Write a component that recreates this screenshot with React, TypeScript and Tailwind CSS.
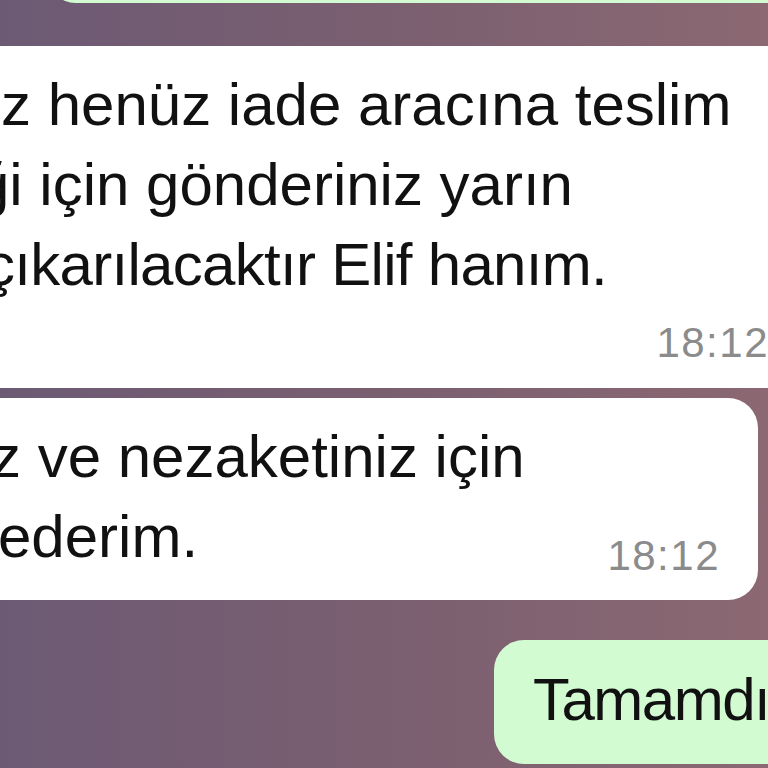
const font = { fontFamily: '"Liberation Sans", Arial, sans-serif' };

type Line = { hidden: string; shown: string; edge: number; tight?: boolean };

// edge = x (relative to the content start at -360px) where the hidden part ends
function TextLine({ line }: { line: Line }) {
  return (
    <div className="flex whitespace-nowrap leading-[80px]">
      <span className="flex shrink-0 justify-end" style={{ width: line.edge }}>
        {line.hidden}
      </span>
      <span className={line.tight ? "tracking-[-0.7px]" : ""}>{line.shown}</span>
    </div>
  );
}

function Time({ className = "" }: { className?: string }) {
  return (
    <span className={"text-[42px] leading-[42px] tracking-[1.5px] text-[#8b8b8b] " + className}>
      18:12
    </span>
  );
}

const first: Line[] = [
  { hidden: "Gönderini", shown: "z henüz iade aracına teslim", edge: 361 },
  { hidden: "edilmedi", shown: "ği için gönderiniz yarın", edge: 336 },
  { hidden: "dağıtıma ", shown: "çıkarılacaktır Elif hanım.", edge: 345, tight: true },
];

const second: Line[] = [
  { hidden: "Anlayışını", shown: "z ve nezaketiniz için", edge: 351 },
];

export default function App() {
  return (
    <div
      className="relative flex h-[768px] w-[768px] flex-col overflow-hidden bg-linear-to-r from-[#6c5a74] via-[#7a5f70] to-[#8b6872] text-[60px] text-[#111]"
      style={font}
    >
      {/* outgoing bubble above, mostly scrolled off */}
      <div className="ml-[46px] mt-[-57px] h-[60px] w-[800px] shrink-0 rounded-[30px] bg-[#d3fbd2]" />

      {/* incoming bubble 1 */}
      <div className="ml-[-400px] mt-[43px] w-[1207px] shrink-0 rounded-[30px] bg-white pb-[24px] pl-[40px] pr-[38px] pt-[19px]">
        {first.map((l) => (
          <TextLine key={l.shown} line={l} />
        ))}
        <div className="mt-[17px] flex justify-end">
          <Time />
        </div>
      </div>

      {/* incoming bubble 2 */}
      <div className="ml-[-400px] mt-[10px] w-[1158px] shrink-0 rounded-[30px] bg-white pb-[23px] pl-[40px] pr-[38px] pt-[19px]">
        {second.map((l) => (
          <TextLine key={l.shown} line={l} />
        ))}
        <div className="flex items-start whitespace-nowrap leading-[80px]">
          <span className="flex shrink-0 justify-end" style={{ width: 358 }}>
            teşekkür&nbsp;
          </span>
          <span>ederim.</span>
          <Time className="ml-auto mt-[38px]" />
        </div>
      </div>

      {/* outgoing bubble */}
      <div className="ml-[494px] mt-[40px] w-[400px] shrink-0 rounded-[30px] bg-[#d3fbd2] pb-[24px] pl-[39px] pt-[20px] leading-[80px] tracking-[-1.5px] whitespace-nowrap">
        Tamamdır
      </div>
    </div>
  );
}
